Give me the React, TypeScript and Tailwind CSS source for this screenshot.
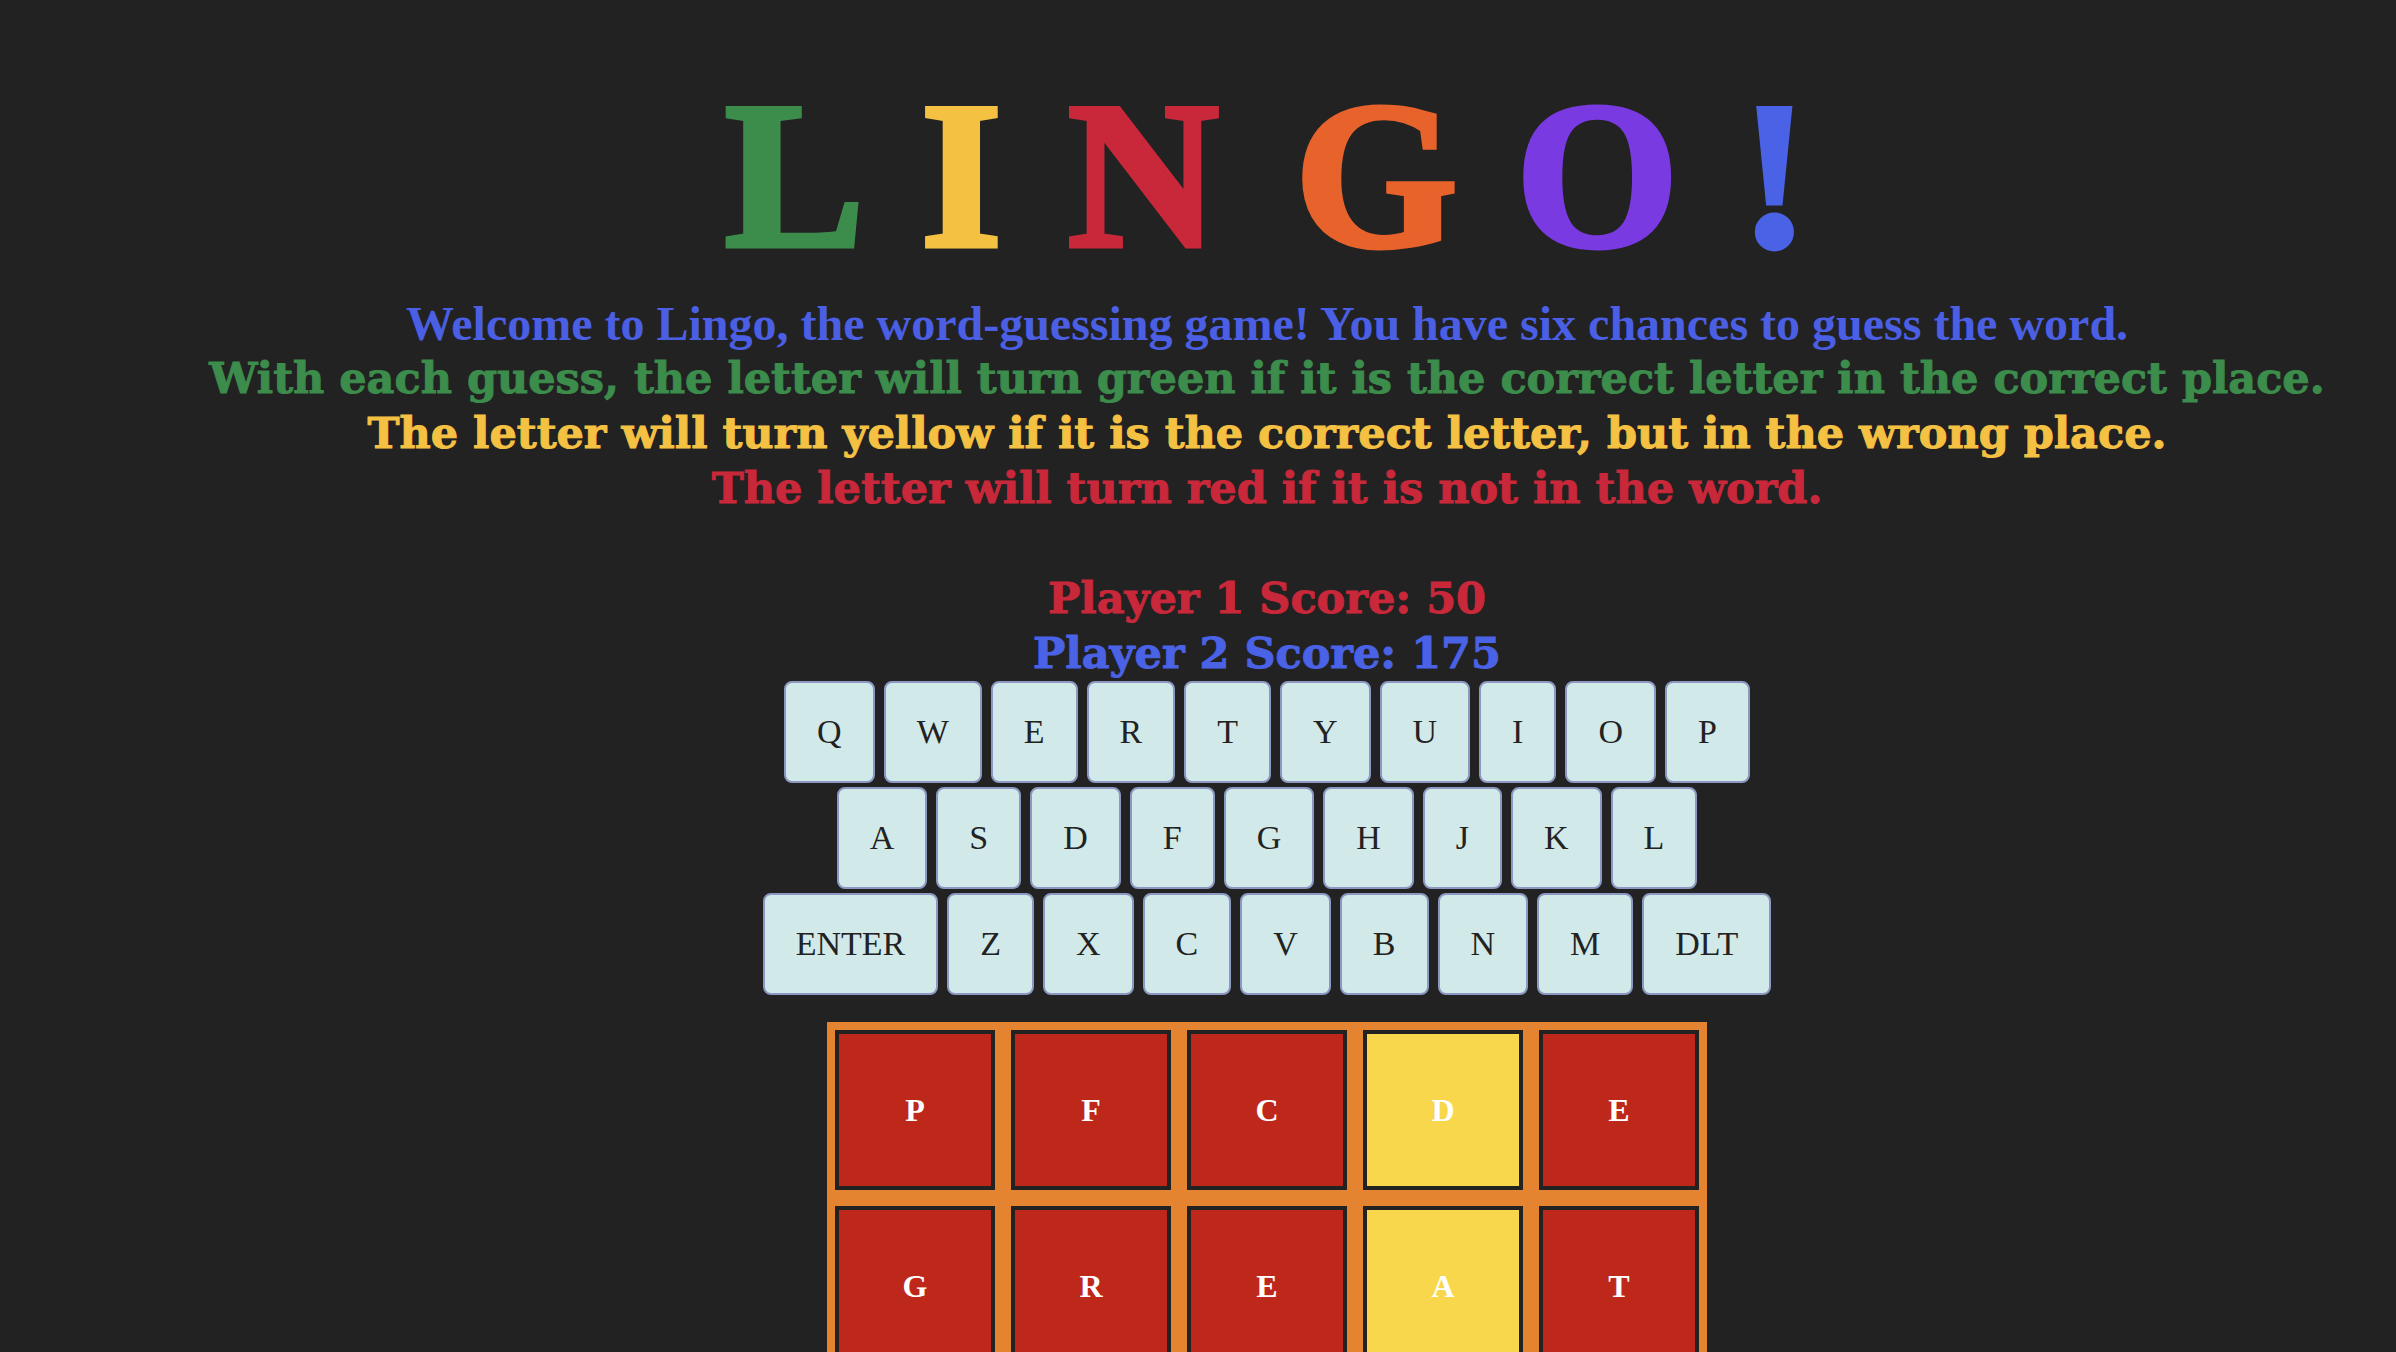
import React from 'react';

const title = [
  { ch: 'L', color: 'text-[#3c8c4c]', w: 'w-[196px]' },
  { ch: 'I', color: 'text-[#f5c143]', w: 'w-[147px]' },
  { ch: 'N', color: 'text-[#c8283a]', w: 'w-[227px]' },
  { ch: 'G', color: 'text-[#e7632b]', w: 'w-[221px]' },
  { ch: 'O', color: 'text-[#7a3ae2]', w: 'w-[224px]' },
  { ch: '!', color: 'text-[#4a62e5]', w: 'w-[70px]' },
];

const rows = [
  ['Q', 'W', 'E', 'R', 'T', 'Y', 'U', 'I', 'O', 'P'],
  ['A', 'S', 'D', 'F', 'G', 'H', 'J', 'K', 'L'],
  ['ENTER', 'Z', 'X', 'C', 'V', 'B', 'N', 'M', 'DLT'],
];

// 'r' = not in word, 'y' = wrong place
const guesses = [
  [['P', 'r'], ['F', 'r'], ['C', 'r'], ['D', 'y'], ['E', 'r']],
  [['G', 'r'], ['R', 'r'], ['E', 'r'], ['A', 'y'], ['T', 'r']],
];

const Key = ({ label }: { label: string }) => (
  <button className="h-[102px] px-[31px] border-2 border-[#8c98c2] rounded-[8px] bg-[#d1e9e9] text-[34px] leading-none text-[#222222] font-['Liberation_Serif',serif]">
    {label}
  </button>
);

const Tile = ({ letter, state }: { letter: string; state: string }) => (
  <div
    className={`w-[160px] h-[160px] border-4 border-[#222222] flex items-center justify-center text-white text-[32px] font-bold font-['Liberation_Serif',serif] ${
      state === 'y' ? 'bg-[#f8d74c]' : 'bg-[#bd281b]'
    }`}
  >
    {letter}
  </div>
);

export default function App() {
  return (
    <div className="h-screen overflow-hidden bg-[#222222] pl-[138px]">
      <div className="flex flex-col items-center">
        <h1 className="flex pt-[70px] text-[210px] leading-[210px] font-bold font-['Liberation_Serif',serif] whitespace-nowrap [-webkit-text-stroke:5px_currentColor]">
          {title.map((t) => (
            <span key={t.ch} className={`${t.w} ${t.color}`}>
              {t.ch}
            </span>
          ))}
        </h1>

        <p className="mt-[17px] text-[48px] leading-[53px] font-bold text-[#4a5fe3] font-['Liberation_Serif',serif] whitespace-nowrap">
          Welcome to Lingo, the word-guessing game! You have six chances to guess the word.
        </p>

        <div className="mt-[1px] flex flex-col items-center text-[43px] leading-[55px] font-bold font-['DejaVu_Serif',serif] whitespace-nowrap [-webkit-text-stroke:1px_currentColor]">
          <p className="text-[#3c8c4c]">
            With each guess, the letter will turn green if it is the correct letter in the correct place.
          </p>
          <p className="text-[#f5c143]">
            The letter will turn yellow if it is the correct letter, but in the wrong place.
          </p>
          <p className="text-[#c8283a]">The letter will turn red if it is not in the word.</p>
        </div>

        <div className="mt-[55px] flex flex-col items-center text-[43px] leading-[55px] font-bold font-['DejaVu_Serif',serif] whitespace-nowrap [-webkit-text-stroke:1px_currentColor]">
          <p className="text-[#c8283a]">Player 1 Score: 50</p>
          <p className="text-[#4a62e5]">Player 2 Score: 175</p>
        </div>

        <div className="flex flex-col items-center gap-[4px]">
          {rows.map((row, i) => (
            <div key={i} className="flex gap-[9px]">
              {row.map((k) => (
                <Key key={k} label={k} />
              ))}
            </div>
          ))}
        </div>

        <div className="mt-[27px] bg-[#e58430] p-[8px] grid grid-cols-5 gap-[16px]">
          {guesses.map((g, r) =>
            g.map(([l, s], c) => <Tile key={`${r}-${c}`} letter={l} state={s} />)
          )}
        </div>
      </div>
    </div>
  );
}
